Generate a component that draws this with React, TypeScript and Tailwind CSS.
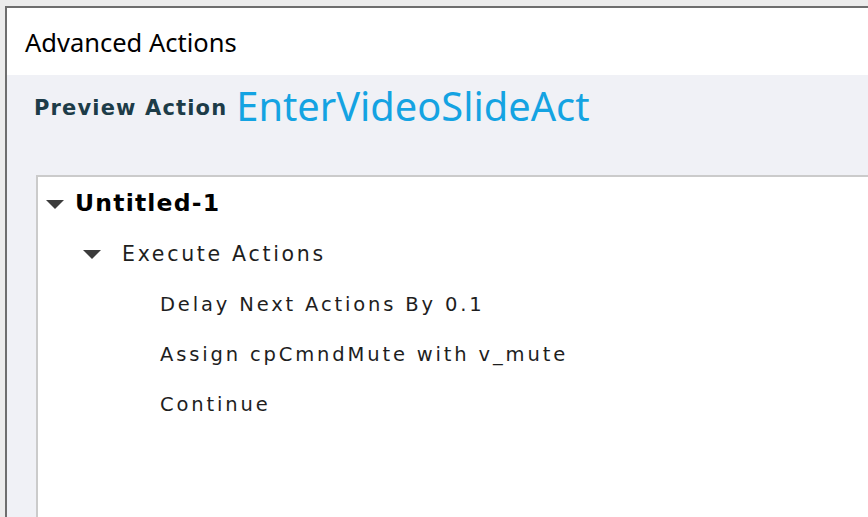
import React from 'react';

const Caret: React.FC<{ className?: string }> = ({ className }) => (
    <svg viewBox="0 0 18 9" className={className}>
        <path d="M0 0 L18 0 L9 9 Z" fill="#3c3c3c" />
    </svg>
);

const actions = ['Delay Next Actions By 0.1', 'Assign cpCmndMute with v_mute', 'Continue'];

const App: React.FC = () => {
    return (
        <div className="w-[868px] h-[517px] overflow-hidden bg-[#ececec] pl-[5px] pt-[6px]">
            <div className="h-full flex flex-col border-l-2 border-t-2 border-[#6e6e6e] bg-white">
                <div className="h-[67px] shrink-0 flex items-center pl-[18px] pt-[1px]">
                    <span className="font-[family-name:Noto_Sans,sans-serif] text-[25.5px] text-black">Advanced Actions</span>
                </div>
                <div className="flex-1 flex flex-col bg-[#f0f1f6]">
                    <div className="h-[100px] shrink-0 flex items-center pl-[27px] pb-[38px]">
                        <span className="font-[family-name:DejaVu_Sans,sans-serif] font-bold text-[21px] tracking-[1.15px] text-[#1d3c48] mt-[5px] mr-[9px]">
                            Preview Action
                        </span>
                        <span className="font-[family-name:Noto_Sans,sans-serif] text-[39.8px] leading-[48px] text-[#14a3e2]">
                            EnterVideoSlideAct
                        </span>
                    </div>
                    <div className="flex-1 ml-[29px] border-l-2 border-t-2 border-[#cbcbcb] bg-white font-[family-name:DejaVu_Sans,sans-serif] text-[#1e1e1e] pt-[2px]">
                        <div className="flex items-center h-[50px] pl-[8px]">
                            <Caret className="w-[18px] h-[9px]" />
                            <span className="ml-[11px] font-bold text-[23.5px] tracking-[1.2px] text-black">Untitled-1</span>
                        </div>
                        <div className="flex items-center h-[50px] pl-[45px] pt-[1px]">
                            <Caret className="w-[18px] h-[9px]" />
                            <span className="ml-[21px] text-[20.5px] tracking-[2.7px]">Execute Actions</span>
                        </div>
                        {actions.map((a) => (
                            <div key={a} className="flex items-center h-[50px] pl-[122px] pt-[1px]">
                                <span className="text-[19.5px] tracking-[2.85px]">{a}</span>
                            </div>
                        ))}
                    </div>
                </div>
            </div>
        </div>
    );
};

export default App;
